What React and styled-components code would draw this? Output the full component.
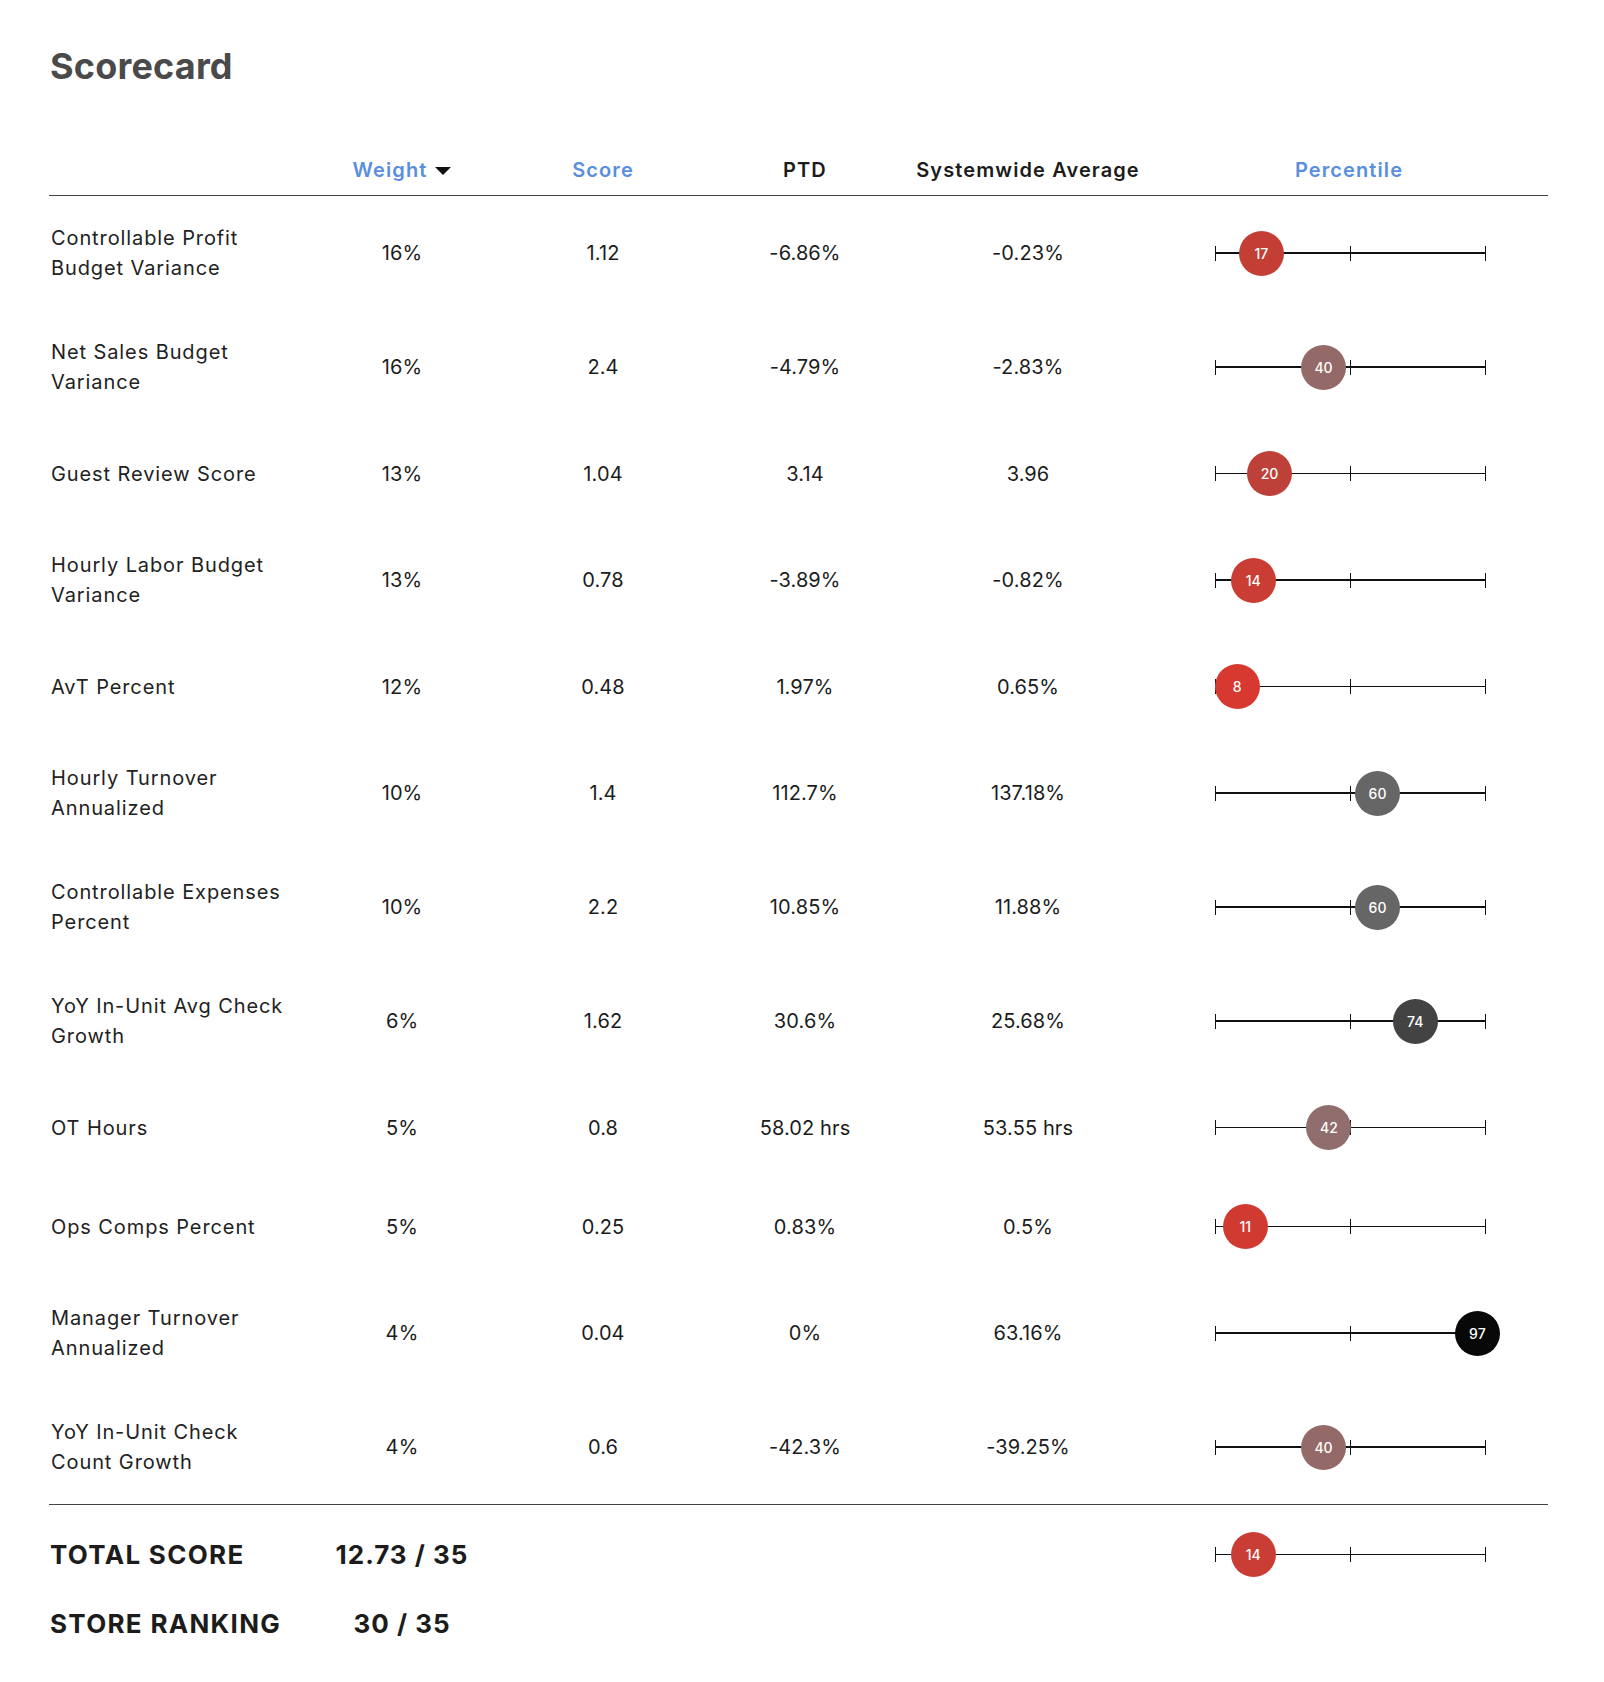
import styled, { createGlobalStyle } from "styled-components";

const GlobalStyle = createGlobalStyle`
  body {
    margin: 0;
    background: #fff;
    font-family: Inter, "Noto Sans", sans-serif;
    color: #1f1f1f;
  }
`;

const metrics = [
    { name: "Controllable Profit\nBudget Variance", weight: "16%", score: "1.12", ptd: "-6.86%", avg: "-0.23%", pct: 17 },
    { name: "Net Sales Budget\nVariance", weight: "16%", score: "2.4", ptd: "-4.79%", avg: "-2.83%", pct: 40 },
    { name: "Guest Review Score", weight: "13%", score: "1.04", ptd: "3.14", avg: "3.96", pct: 20 },
    { name: "Hourly Labor Budget\nVariance", weight: "13%", score: "0.78", ptd: "-3.89%", avg: "-0.82%", pct: 14 },
    { name: "AvT Percent", weight: "12%", score: "0.48", ptd: "1.97%", avg: "0.65%", pct: 8 },
    { name: "Hourly Turnover\nAnnualized", weight: "10%", score: "1.4", ptd: "112.7%", avg: "137.18%", pct: 60 },
    { name: "Controllable Expenses\nPercent", weight: "10%", score: "2.2", ptd: "10.85%", avg: "11.88%", pct: 60 },
    { name: "YoY In-Unit Avg Check\nGrowth", weight: "6%", score: "1.62", ptd: "30.6%", avg: "25.68%", pct: 74 },
    { name: "OT Hours", weight: "5%", score: "0.8", ptd: "58.02 hrs", avg: "53.55 hrs", pct: 42 },
    { name: "Ops Comps Percent", weight: "5%", score: "0.25", ptd: "0.83%", avg: "0.5%", pct: 11 },
    { name: "Manager Turnover\nAnnualized", weight: "4%", score: "0.04", ptd: "0%", avg: "63.16%", pct: 97 },
    { name: "YoY In-Unit Check\nCount Growth", weight: "4%", score: "0.6", ptd: "-42.3%", avg: "-39.25%", pct: 40 },
];

// red -> mauve -> grey -> black
const stops = [
    [0, [232, 50, 40]],
    [20, [189, 65, 57]],
    [40, [147, 106, 104]],
    [50, [128, 128, 128]],
    [100, [0, 0, 0]],
];

const dotColor = (p) => {
    for (let i = 1; i < stops.length; i++) {
        const [p1, c1] = stops[i];
        const [p0, c0] = stops[i - 1];
        if (p <= p1) {
            const t = (p - p0) / (p1 - p0);
            const c = c0.map((v, k) => Math.round(v + (c1[k] - v) * t));
            return `rgb(${c.join(",")})`;
        }
    }
    return "#000";
};

const Percentile = ({ value }) => (
    <Track>
        <Tick $at={0} />
        <Tick $at={50} />
        <Tick $at={100} />
        <Dot style={{ left: `${value}%`, background: dotColor(value) }}>{value}</Dot>
    </Track>
);

const App = () => {
    return (
        <>
            <GlobalStyle />
            <Page>
                <Title>Scorecard</Title>
                <HeadRow>
                    <span />
                    <HeadCell $active>
                        Weight <Caret />
                    </HeadCell>
                    <HeadCell $active>Score</HeadCell>
                    <HeadCell>PTD</HeadCell>
                    <HeadCell>Systemwide Average</HeadCell>
                    <HeadCell $active>Percentile</HeadCell>
                </HeadRow>
                <Body>
                    {metrics.map((m) => (
                        <Row key={m.name}>
                            <Name>{m.name}</Name>
                            <Value>{m.weight}</Value>
                            <Value>{m.score}</Value>
                            <Value>{m.ptd}</Value>
                            <Value>{m.avg}</Value>
                            <ChartCell>
                                <Percentile value={m.pct} />
                            </ChartCell>
                        </Row>
                    ))}
                </Body>
                <Summary>
                    <SummaryRow>
                        <Label>TOTAL SCORE</Label>
                        <Figure>12.73 / 35</Figure>
                        <span />
                        <span />
                        <span />
                        <ChartCell>
                            <Percentile value={14} />
                        </ChartCell>
                    </SummaryRow>
                    <SummaryRow>
                        <Label>STORE RANKING</Label>
                        <Figure>30 / 35</Figure>
                    </SummaryRow>
                </Summary>
            </Page>
        </>
    );
};
export default App;

const columns = "253px 200px 202px 202px 244px 1fr";

const Page = styled.div`
    padding: 44px 56px 41px 49px;
`

const Title = styled.h1`
    margin: 0 0 70px 1px;
    font-size: 36px;
    line-height: 44px;
    font-weight: 700;
    color: #4a4a4a;
    letter-spacing: 0.2px;
`

const HeadRow = styled.div`
    display: grid;
    grid-template-columns: ${columns};
    padding-bottom: 13px;
    border-bottom: 1px solid #444;
`

const HeadCell = styled.div`
    display: flex;
    align-items: center;
    justify-content: center;
    gap: 8px;
    font-size: 20px;
    line-height: 24px;
    font-weight: 600;
    letter-spacing: 1.1px;
    color: ${(p) => (p.$active ? "#5a8ede" : "#1c1c1c")};
`

const Caret = styled.span`
    width: 0;
    height: 0;
    border-left: 8px solid transparent;
    border-right: 8px solid transparent;
    border-top: 8px solid #111;
    margin-top: 2px;
`

const Body = styled.div`
    border-bottom: 1px solid #444;
`

const Row = styled.div`
    display: grid;
    grid-template-columns: ${columns};
    align-items: center;
    padding: 27px 0;
`

const Name = styled.div`
    padding-left: 2px;
    white-space: pre-line;
    font-size: 20px;
    line-height: 30px;
    letter-spacing: 0.9px;
    color: #222;
`

const Value = styled.div`
    text-align: center;
    font-size: 20px;
    line-height: 30px;
    letter-spacing: 0.1px;
    color: #1c1c1c;
`

const ChartCell = styled.div`
    display: flex;
    justify-content: center;
    padding-left: 3px;
`

const Track = styled.div`
    position: relative;
    width: 270px;
    height: 45px;

    &::before {
        content: "";
        position: absolute;
        left: 0;
        right: 0;
        top: 21.75px;
        height: 1.5px;
        background: #111;
    }
`

const Tick = styled.span`
    position: absolute;
    left: ${(p) => `calc(${p.$at}% - 0.75px)`};
    top: 15px;
    width: 1.5px;
    height: 15px;
    background: #111;
`

const Dot = styled.div`
    position: absolute;
    top: 0;
    width: 45px;
    height: 45px;
    margin-left: -22.5px;
    border-radius: 50%;
    display: flex;
    align-items: center;
    justify-content: center;
    font-size: 14px;
    font-weight: 500;
    color: #fff;
`

const Summary = styled.div`
    padding-top: 27px;
    display: flex;
    flex-direction: column;
    gap: 31px;
`

const SummaryRow = styled.div`
    display: grid;
    grid-template-columns: ${columns};
    align-items: center;
`

const Label = styled.div`
    padding-left: 1px;
    font-size: 26px;
    line-height: 32px;
    font-weight: 700;
    letter-spacing: 1.3px;
    color: #1c1c1c;
`

const Figure = styled(Label)`
    padding-left: 0;
    text-align: center;
    white-space: nowrap;
    letter-spacing: 1px;
`
